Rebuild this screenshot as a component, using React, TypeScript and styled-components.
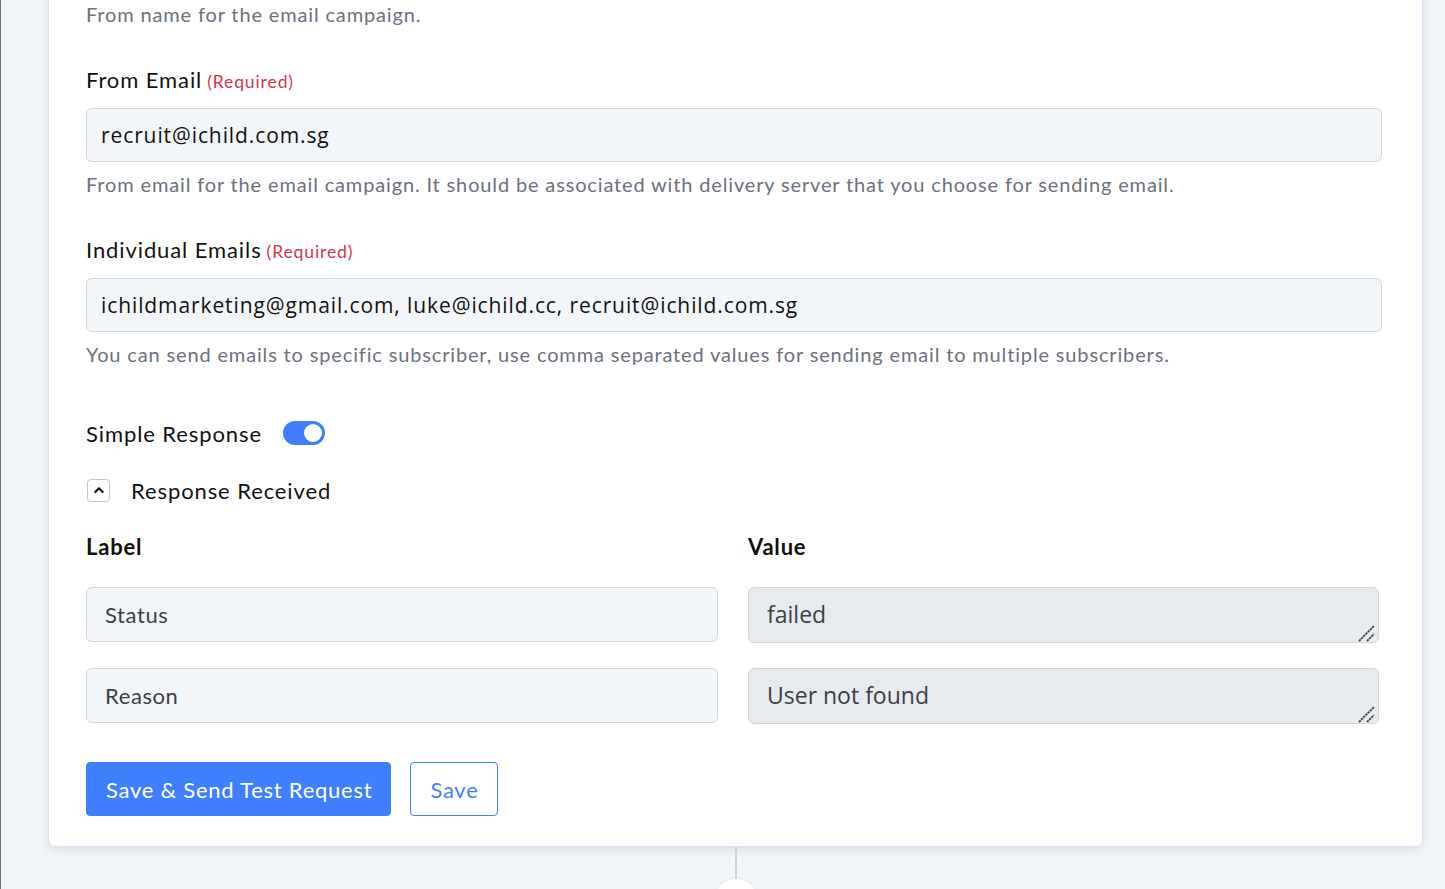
import { Fragment } from "react";
import styled, { createGlobalStyle } from "styled-components";

const GlobalStyle = createGlobalStyle`
  html, body {
    margin: 0;
    padding: 0;
    background: #f1f4f8;
    overflow: hidden;
  }
  body {
    border-left: 1px solid #727272;
    font-family: Lato, "Open Sans", sans-serif;
  }
`;

const Page = styled.div`
  padding-left: 47px;
  width: 1375px;
  display: flex;
  flex-direction: column;
  align-items: center;
`;

const Card = styled.div`
  display: flex;
  flex-direction: column;
  width: 100%;
  box-sizing: border-box;
  margin-top: -31px;
  padding: 30px 40px 30px 37px;
  background: #fff;
  border: 1px solid #d8e0f6;
  border-radius: 0 0 7px 7px;
  box-shadow: 0 3px 10px rgba(60, 72, 100, 0.12);
`;

const Field = styled.div`
  display: flex;
  flex-direction: column;
  margin-bottom: 39px;
`;

const LabelRow = styled.label`
  display: flex;
  align-items: baseline;
  gap: 5px;
  font-family: Lato, sans-serif;
  font-size: 22px;
  letter-spacing: 0.9px;
  line-height: 26px;
  color: #111;
  margin-bottom: 13px;
`;

const Required = styled.span`
  font-size: 17.5px;
  letter-spacing: 0.9px;
  color: #d2354c;
`;

const TextInput = styled.input`
  box-sizing: border-box;
  width: 100%;
  height: 54px;
  padding: 0 14px;
  border: 1px solid #d3d7dd;
  border-radius: 6px;
  background: #f3f6f9;
  font-family: "Open Sans", sans-serif;
  font-size: 21px;
  letter-spacing: 0.9px;
  color: #111;
  outline: none;
`;

const Help = styled.p`
  margin: 8px 0 0;
  font-family: Lato, sans-serif;
  font-size: 20px;
  letter-spacing: 0.85px;
  line-height: 28px;
  color: #6b717d;
`;

const TopHelp = styled(Help)`
  margin: 0 0 39px;
`;

const ToggleRow = styled.div`
  display: flex;
  align-items: center;
  gap: 21px;
  height: 26px;
  margin-top: 13px;
  font-size: 22px;
  letter-spacing: 0.9px;
  color: #111;
`;

const Switch = styled.span<{ $on: boolean }>`
  position: relative;
  width: 42px;
  height: 24px;
  border-radius: 12px;
  background: ${(p) => (p.$on ? "#3f7ffd" : "#c9cdd4")};

  &::after {
    content: "";
    position: absolute;
    top: 3px;
    left: ${(p) => (p.$on ? "21px" : "3px")};
    width: 18px;
    height: 18px;
    border-radius: 50%;
    background: #fff;
  }
`;

const Collapse = styled.div`
  display: flex;
  align-items: center;
  gap: 21px;
  height: 26px;
  margin-top: 31px;
  font-size: 22px;
  letter-spacing: 0.9px;
  color: #111;
`;

const ChevronBox = styled.span`
  display: flex;
  align-items: center;
  justify-content: center;
  box-sizing: border-box;
  width: 23px;
  height: 23px;
  margin-left: 1px;
  border: 1px solid #c3c7ce;
  border-radius: 4px;
`;

const PairGrid = styled.div`
  display: grid;
  grid-template-columns: 632px 631px;
  column-gap: 30px;
  row-gap: 25px;
  margin-top: 31px;
`;

const ColumnHead = styled.div`
  font-size: 22px;
  font-weight: 700;
  letter-spacing: 0.8px;
  line-height: 26px;
  color: #111;
  margin-bottom: 2px;
`;

const PairInput = styled(TextInput)`
  height: 55px;
  padding: 0 18px;
  font-family: Lato, sans-serif;
  font-size: 22px;
  letter-spacing: 0.6px;
  color: #3a3f47;
`;

const ValueWrap = styled.div`
  position: relative;
  height: 56px;
`;

const ValueBox = styled.textarea`
  display: block;
  box-sizing: border-box;
  width: 100%;
  height: 56px;
  padding: 11px 18px;
  border: 1px solid #d3d7dd;
  border-radius: 6px;
  background: #e8ebee;
  font-family: "Open Sans", sans-serif;
  font-size: 23px;
  line-height: 31px;
  color: #3a3f47;
  resize: none;
  overflow: hidden;
  outline: none;
`;

const Grip = styled.svg`
  position: absolute;
  right: 3px;
  bottom: 1px;
  pointer-events: none;
`;

const Actions = styled.div`
  display: flex;
  gap: 19px;
  margin-top: 38px;
`;

const Button = styled.button<{ $primary?: boolean }>`
  height: 54px;
  padding: 0 18px 0 19px;
  border-radius: 4px;
  border: 1px solid #3f7ffd;
  background: ${(p) => (p.$primary ? "#3f7ffd" : "#fff")};
  color: ${(p) => (p.$primary ? "#fff" : "#3f7ffd")};
  font-family: Lato, sans-serif;
  font-size: 22px;
  letter-spacing: 0.75px;
  cursor: pointer;
`;

const Connector = styled.div`
  width: 2px;
  height: 32px;
  background: #cfd3da;
`;

const Node = styled.div`
  width: 44px;
  height: 44px;
  border-radius: 50%;
  background: #fff;
  box-shadow: 0 1px 4px rgba(60, 72, 100, 0.12);
`;

export default function App() {
  const pairs = [
    { label: "Status", value: "failed" },
    { label: "Reason", value: "User not found" },
  ];

  return (
    <>
      <GlobalStyle />
      <Page>
        <Card>
          <TopHelp>From name for the email campaign.</TopHelp>

          <Field>
            <LabelRow>
              From Email <Required>(Required)</Required>
            </LabelRow>
            <TextInput readOnly value="recruit@ichild.com.sg" />
            <Help>
              From email for the email campaign. It should be associated with delivery server that you
              choose for sending email.
            </Help>
          </Field>

          <Field>
            <LabelRow>
              Individual Emails <Required>(Required)</Required>
            </LabelRow>
            <TextInput readOnly value="ichildmarketing@gmail.com, luke@ichild.cc, recruit@ichild.com.sg" />
            <Help>
              You can send emails to specific subscriber, use comma separated values for sending email to
              multiple subscribers.
            </Help>
          </Field>

          <ToggleRow>
            Simple Response
            <Switch $on />
          </ToggleRow>

          <Collapse>
            <ChevronBox>
              <svg width="12" height="12" viewBox="0 0 12 12" fill="none">
                <path d="M2.3 8 L6 4.3 L9.7 8" stroke="#111" strokeWidth="2.2" strokeLinecap="round" strokeLinejoin="round" />
              </svg>
            </ChevronBox>
            Response Received
          </Collapse>

          <PairGrid>
            <ColumnHead>Label</ColumnHead>
            <ColumnHead>Value</ColumnHead>
            {pairs.map((p) => (
              <Fragment key={p.label}>
                <PairInput readOnly value={p.label} />
                <ValueWrap>
                  <ValueBox readOnly value={p.value} />
                  {/* resize grip */}
                  <Grip width="18" height="18" viewBox="0 0 18 18">
                    <path d="M1 17 L16 2 M9 17 L16 10" stroke="#444" strokeWidth="1.8" strokeDasharray="2.4 0.7" />
                  </Grip>
                </ValueWrap>
              </Fragment>
            ))}
          </PairGrid>

          <Actions>
            <Button $primary>Save &amp; Send Test Request</Button>
            <Button>Save</Button>
          </Actions>
        </Card>
        <Connector />
        <Node />
      </Page>
    </>
  );
}
